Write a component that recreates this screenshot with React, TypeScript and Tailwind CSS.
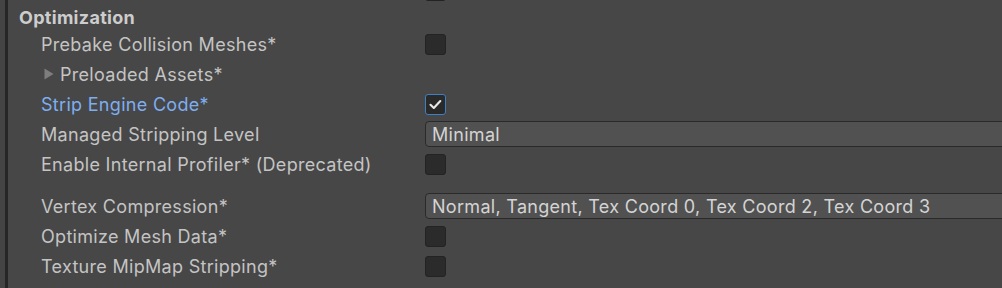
import React from "react";

const font = { fontFamily: "Inter, 'Noto Sans', sans-serif" };

function Checkbox({ checked = false }: { checked?: boolean }) {
  if (checked) {
    return (
      <div className="w-[21px] h-[21px] rounded-[3px] border border-[#3f7fc4] bg-[#2a2a2a] flex items-center justify-center">
        <svg width="15" height="15" viewBox="0 0 15 15">
          <path d="M2.5 7.8 L5.8 11 L12.3 4" fill="none" stroke="#e8e8e8" strokeWidth="2.1" strokeLinecap="round" strokeLinejoin="round" />
        </svg>
      </div>
    );
  }
  return <div className="w-[21px] h-[21px] rounded-[3px] border border-[#232323] bg-[#2b2b2b]" />;
}

function Dropdown({ text }: { text: string }) {
  return (
    <div className="h-[26px] w-[600px] shrink-0 rounded-l-[4px] border border-[#2a2a2a] bg-[#515151] flex items-center pl-[6px] text-[18px] tracking-[0.3px] text-[#d4d4d4] whitespace-nowrap">
      {text}
    </div>
  );
}

function Row({
  label,
  children,
  blue = false,
  foldout = false,
}: {
  label: string;
  children?: React.ReactNode;
  blue?: boolean;
  foldout?: boolean;
}) {
  return (
    <div className="h-[30px] flex items-center">
      <div className={`w-[417px] shrink-0 flex items-center whitespace-nowrap ${foldout ? "pl-[36px]" : "pl-[33px]"}`}>
        {foldout && (
          <svg width="10" height="12" viewBox="0 0 10 12" className="mr-[6px]">
            <polygon points="0.5,0.5 9.5,6 0.5,11.5" fill="#7e7e7e" />
          </svg>
        )}
        <span className={`text-[18px] tracking-[0.3px] ${blue ? "text-[#7eaef0]" : "text-[#c4c4c4]"}`}>{label}</span>
      </div>
      <div className="flex-1 flex items-center overflow-hidden">{children}</div>
    </div>
  );
}

export default function App() {
  return (
    <div className="w-[1002px] h-[288px] bg-[#474747] flex overflow-hidden" style={font}>
      <div className="w-[5px] shrink-0 bg-[#444444]" />
      <div className="w-[3px] shrink-0 bg-[#262626]" />
      <div className="flex-1 flex flex-col -mt-[25px] overflow-hidden">
        <Row label="">
          <Checkbox />
        </Row>
        <div className="h-[24px] flex items-center pl-[11px]">
          <span className="text-[18px] tracking-[0.3px] font-bold text-[#cdcdcd]">Optimization</span>
        </div>
        <Row label="Prebake Collision Meshes*">
          <Checkbox />
        </Row>
        <Row label="Preloaded Assets*" foldout />
        <Row label="Strip Engine Code*" blue>
          <Checkbox checked />
        </Row>
        <Row label="Managed Stripping Level">
          <Dropdown text="Minimal" />
        </Row>
        <Row label="Enable Internal Profiler* (Deprecated)">
          <Checkbox />
        </Row>
        <div className="h-[12px]" />
        <Row label="Vertex Compression*">
          <Dropdown text="Normal, Tangent, Tex Coord 0, Tex Coord 2, Tex Coord 3" />
        </Row>
        <Row label="Optimize Mesh Data*">
          <Checkbox />
        </Row>
        <Row label="Texture MipMap Stripping*">
          <Checkbox />
        </Row>
      </div>
    </div>
  );
}
